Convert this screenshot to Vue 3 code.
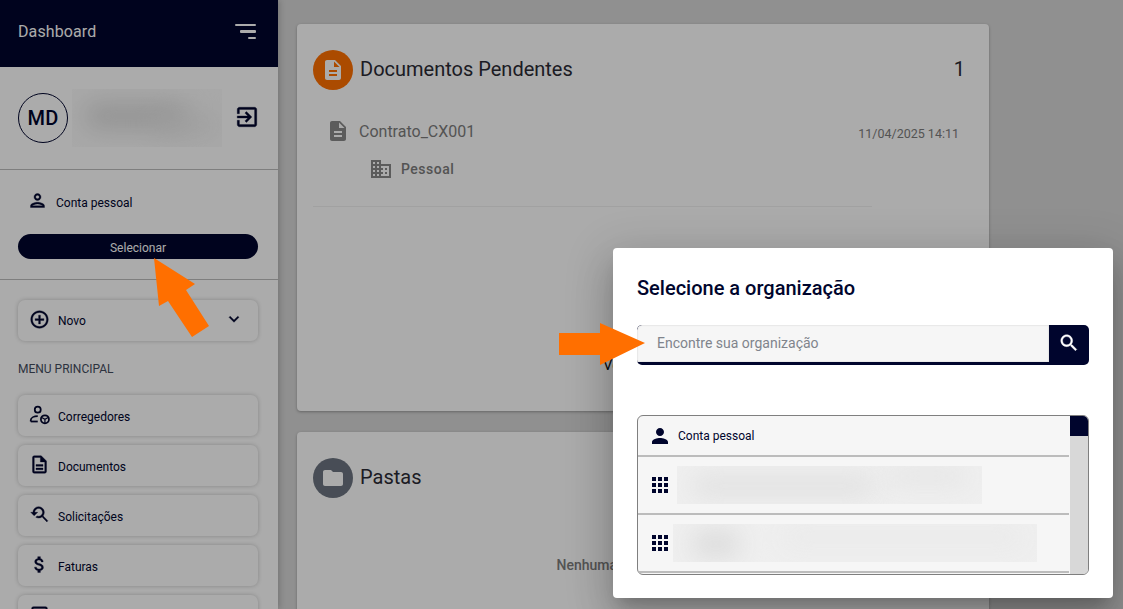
<script setup>
const paths = {
  person: 'M12 12c2.21 0 4-1.79 4-4s-1.79-4-4-4-4 1.79-4 4 1.79 4 4 4zm0 2c-2.67 0-8 1.34-8 4v2h16v-2c0-2.66-5.33-4-8-4z',
  personOutline: 'M12 6c1.1 0 2 .9 2 2s-.9 2-2 2-2-.9-2-2 .9-2 2-2m0 10c2.7 0 5.8 1.29 6 2H6c.23-.72 3.31-2 6-2m0-12C9.79 4 8 5.79 8 8s1.79 4 4 4 4-1.79 4-4-1.79-4-4-4zm0 10c-2.67 0-8 1.34-8 4v2h16v-2c0-2.66-5.33-4-8-4z',
  exit: 'M10.09 15.59L11.5 17l5-5-5-5-1.41 1.41L12.67 11H3v2h9.67l-2.58 2.59zM19 3H5c-1.11 0-2 .9-2 2v4h2V5h14v14H5v-4H3v4c0 1.1.89 2 2 2h14c1.1 0 2-.9 2-2V5c0-1.1-.9-2-2-2z',
  add: 'M13 7h-2v4H7v2h4v4h2v-4h4v-2h-4V7zm-1-5C6.48 2 2 6.48 2 12s4.48 10 10 10 10-4.48 10-10S17.52 2 12 2zm0 18c-4.41 0-8-3.59-8-8s3.59-8 8-8 8 3.59 8 8-3.59 8-8 8z',
  expand: 'M16.59 8.59L12 13.17 7.41 8.59 6 10l6 6 6-6z',
  docOutline: 'M8 16h8v2H8zm0-4h8v2H8zm6-10H6c-1.1 0-2 .9-2 2v16c0 1.1.89 2 1.99 2H18c1.1 0 2-.9 2-2V8l-6-6zm4 18H6V4h7v5h5v11z',
  doc: 'M14 2H6c-1.1 0-1.99.9-1.99 2L4 20c0 1.1.89 2 1.99 2H18c1.1 0 2-.9 2-2V8l-6-6zm2 16H8v-2h8v2zm0-4H8v-2h8v2zm-3-5V3.5L18.5 9H13z',
  searched: 'M17.01 14h-.8l-.27-.27c.98-1.14 1.57-2.61 1.57-4.23 0-3.59-2.91-6.5-6.5-6.5s-6.5 3-6.5 6.5H2l3.84 4 4.16-4H6.51C6.51 7 8.53 5 11.01 5s4.5 2.01 4.5 4.5c0 2.48-2.02 4.5-4.5 4.5-.65 0-1.26-.14-1.82-.38L7.71 15.1c.97.57 2.09.9 3.3.9 1.61 0 3.08-.59 4.22-1.57l.27.27v.79l5.01 5L21.5 19l-5-5z',
  money: 'M11.8 10.9c-2.27-.59-3-1.2-3-2.15 0-1.09 1.01-1.85 2.7-1.85 1.78 0 2.44.85 2.5 2.1h2.21c-.07-1.72-1.12-3.3-3.21-3.81V3h-3v2.16c-1.94.42-3.5 1.68-3.5 3.61 0 2.31 1.91 3.46 4.7 4.13 2.5.6 3 1.48 3 2.41 0 .69-.49 1.79-2.7 1.79-2.06 0-2.87-.92-2.98-2.1h-2.2c.12 2.19 1.76 3.42 3.68 3.83V21h3v-2.15c1.95-.37 3.5-1.5 3.5-3.55 0-2.84-2.43-3.81-4.7-4.4z',
  domain: 'M12 7V3H2v18h20V7H12zM6 19H4v-2h2v2zm0-4H4v-2h2v2zm0-4H4V9h2v2zm0-4H4V5h2v2zm4 12H8v-2h2v2zm0-4H8v-2h2v2zm0-4H8V9h2v2zm0-4H8V5h2v2zm10 12h-8v-2h2v-2h-2v-2h2v-2h-2V9h8v10zm-2-8h-2v2h2v-2zm0 4h-2v2h2v-2z',
  search: 'M15.5 14h-.79l-.28-.27C15.41 12.59 16 11.11 16 9.5 16 5.91 13.09 3 9.5 3S3 5.91 3 9.5 5.91 16 9.5 16c1.61 0 3.09-.59 4.23-1.57l.27.28v.79l5 4.99L20.49 19l-4.99-5zm-6 0C7.01 14 5 11.99 5 9.5S7.01 5 9.5 5 14 7.01 14 9.5 11.99 14 9.5 14z',
  apps: 'M4 8h4V4H4v4zm6 12h4v-4h-4v4zm-6 0h4v-4H4v4zm0-6h4v-4H4v4zm6 0h4v-4h-4v4zm6-10v4h4V4h-4zm-6 4h4V4h-4v4zm6 6h4v-4h-4v4zm0 6h4v-4h-4v4z',
  folder: 'M10 4H4c-1.1 0-1.99.9-1.99 2L2 18c0 1.1.9 2 2 2h16c1.1 0 2-.9 2-2V8c0-1.1-.9-2-2-2h-8l-2-2z',
  inbox: 'M19 3H5c-1.1 0-2 .9-2 2v14c0 1.1.9 2 2 2h14c1.1 0 2-.9 2-2V5c0-1.1-.9-2-2-2zm0 16H5V5h14v14z'
}
const menu = [
  { label: 'Documentos', icon: paths.docOutline },
  { label: 'Solicitações', icon: paths.searched },
  { label: 'Faturas', icon: paths.money },
  { label: '', icon: paths.inbox }
]
</script>

<template>
  <div class="page">
    <aside class="sidebar">
      <header class="brand">
        <span>Dashboard</span>
        <span class="burger"><i class="l1"></i><i class="l2"></i><i class="l3"></i></span>
      </header>

      <section class="user">
        <div class="avatar">MD</div>
        <div class="blur-box user-blur"><i class="blob b1"></i><i class="blob b2"></i></div>
        <svg class="exit" viewBox="0 0 24 24"><path :d="paths.exit" /></svg>
      </section>

      <section class="account">
        <div class="acc-row">
          <svg class="acc-icon" viewBox="0 0 24 24"><path :d="paths.personOutline" /></svg>
          <span>Conta pessoal</span>
        </div>
        <button class="select-btn">Selecionar</button>
      </section>

      <nav class="nav">
        <div class="nav-btn new-btn">
          <svg class="nav-icon" viewBox="0 0 24 24"><path :d="paths.add" /></svg>
          <span class="nav-label novo">Novo</span>
          <svg class="chev" viewBox="0 0 24 24"><path :d="paths.expand" /></svg>
        </div>
        <div class="section-title">MENU PRINCIPAL</div>
        <div class="nav-btn">
          <svg class="nav-icon line-icon" viewBox="0 0 24 24">
            <circle cx="10" cy="6.5" r="3.4" />
            <path d="M2 20v-1.5c0-3 4-4.6 8-4.6" />
            <path d="M2 20h8" />
            <circle cx="18.2" cy="17.5" r="4.6" />
            <path d="M14.5 15.5l3.7 2 3.7-2M18.2 17.5v4.4" class="thin" />
          </svg>
          <span class="nav-label">Corregedores</span>
        </div>
        <div v-for="item in menu" :key="item.icon" class="nav-btn">
          <svg class="nav-icon" viewBox="0 0 24 24"><path :d="item.icon" /></svg>
          <span v-if="item.label" class="nav-label">{{ item.label }}</span>
        </div>
      </nav>
    </aside>

    <main class="main">
      <article class="card pending">
        <div class="card-head">
          <span class="circle orange"><svg viewBox="0 0 24 24"><path :d="paths.doc" /></svg></span>
          <h2>Documentos Pendentes</h2>
          <span class="count">1</span>
        </div>
        <div class="doc-row">
          <svg class="doc-icon" viewBox="0 0 24 24"><path :d="paths.doc" /></svg>
          <span class="doc-name">Contrato_CX001</span>
          <span class="doc-date">11/04/2025 14:11</span>
        </div>
        <div class="org-row">
          <svg class="org-icon" viewBox="0 0 24 24"><path :d="paths.domain" /></svg>
          <span>Pessoal</span>
        </div>
        <div class="divider"></div>
        <div class="see-all">Ver todos</div>
      </article>

      <article class="card folders">
        <div class="card-head">
          <span class="circle slate"><svg viewBox="0 0 24 24"><path :d="paths.folder" /></svg></span>
          <h2>Pastas</h2>
        </div>
        <p class="empty">Nenhuma pasta encontrada</p>
      </article>
    </main>

    <div class="overlay"></div>

    <section class="modal">
      <h3>Selecione a organização</h3>
      <div class="search">
        <div class="search-input">Encontre sua organização</div>
        <div class="search-btn"><svg viewBox="0 0 24 24"><path :d="paths.search" /></svg></div>
      </div>
      <div class="org-list">
        <div class="rows">
          <div class="row first">
            <svg class="row-icon" viewBox="0 0 24 24"><path :d="paths.person" /></svg>
            <span class="row-text">Conta pessoal</span>
          </div>
          <div class="row tall">
            <svg class="row-icon" viewBox="0 0 24 24"><path :d="paths.apps" /></svg>
            <div class="blur-box r1"><i class="blob b3"></i><i class="blob b4"></i></div>
          </div>
          <div class="row tall">
            <svg class="row-icon" viewBox="0 0 24 24"><path :d="paths.apps" /></svg>
            <div class="blur-box r2"><i class="blob b5"></i><i class="blob b6"></i></div>
          </div>
        </div>
        <div class="scrollbar"><div class="thumb"></div></div>
      </div>
    </section>

    <svg class="arrows" viewBox="0 0 1123 609">
      <polygon points="154,258 195,284 186,290 209,326 192,337 168,301 159,306" fill="#ff6f00" />
      <polygon points="559,333 600,333 600,323 645,343 600,365 600,355 559,355" fill="#ff6f00" />
    </svg>
  </div>
</template>

<style>
html, body { margin: 0; padding: 0; overflow: hidden; }
</style>

<style scoped>
.page {
  position: relative;
  display: flex;
  width: 1123px;
  height: 609px;
  overflow: hidden;
  background: #d7d7d7;
  font-family: Roboto, "Liberation Sans", sans-serif;
  color: #00052d;
}
.sidebar {
  width: 278px;
  flex: none;
  background: #fff;
  box-shadow: 2px 0 6px rgba(0, 0, 0, .18);
  z-index: 1;
}
.brand {
  height: 67px;
  background: #00052d;
  color: #fff;
  display: flex;
  align-items: center;
  justify-content: space-between;
  padding: 0 22px 4px 18px;
  box-sizing: border-box;
  font-size: 16px;
  letter-spacing: .1px;
}
.burger { display: flex; flex-direction: column; align-items: flex-end; gap: 4px; }
.burger i { display: block; height: 2.4px; background: #fff; border-radius: 1px; }
.l1 { width: 21px; }
.l2 { width: 16px; }
.l3 { width: 8px; }
.user {
  height: 103px;
  display: flex;
  align-items: center;
  padding: 0 18px;
  box-sizing: border-box;
  border-bottom: 1px solid #bdbdbd;
  position: relative;
}
.avatar {
  width: 50px;
  height: 50px;
  box-sizing: border-box;
  border: 1px solid #00052d;
  border-radius: 50%;
  display: flex;
  align-items: center;
  justify-content: center;
  font-size: 20px;
  font-weight: 500;
  letter-spacing: .3px;
  flex: none;
}
.blur-box { position: relative; overflow: hidden; flex: none; }
.blob { position: absolute; display: block; filter: blur(12px); border-radius: 8px; }
.user-blur { width: 150px; height: 58px; margin-left: 4px; background: #fbfbfb; }
.b1 { left: 14px; top: 16px; width: 100px; height: 22px; background: #d8d8d8; }
.b2 { left: 80px; top: 28px; width: 64px; height: 16px; background: #eaeaea; }
.exit { width: 26px; height: 26px; margin-left: 12px; margin-top: -2px; fill: #00052d; flex: none; stroke: #00052d; stroke-width: .3; }
.account {
  height: 110px;
  padding: 0 20px 0 18px;
  box-sizing: border-box;
  border-bottom: 1px solid #bdbdbd;
}
.acc-row {
  display: flex;
  align-items: center;
  height: 64px;
  padding-left: 9px;
  padding-top: 1px;
  box-sizing: border-box;
  font-size: 12px;
}
.acc-icon { width: 21px; height: 21px; fill: #00052d; margin-right: 8px; margin-top: -5px; stroke: #00052d; stroke-width: .4; }
.select-btn {
  display: block;
  width: 240px;
  height: 25px;
  border: 0;
  padding: 2px 0 0;
  border-radius: 13px;
  background: #00052d;
  color: #fff;
  font: 12px Roboto, "Liberation Sans", sans-serif;
}
.nav { padding: 20px 20px 0 18px; }
.nav-btn {
  height: 41px;
  box-sizing: border-box;
  border-radius: 7px;
  box-shadow: 0 0 4px rgba(0, 0, 0, .22);
  display: flex;
  align-items: center;
  padding-left: 11px;
  margin-bottom: 9px;
  font-size: 12px;
}
.new-btn { margin-bottom: 0; }
.nav-icon { width: 21px; height: 21px; fill: #00052d; margin-right: 8px; margin-top: -3px; flex: none; stroke: #00052d; stroke-width: .4; }
.line-icon { fill: none; stroke-width: 2; }
.line-icon .thin { stroke-width: 1.4; }
.nav-label { padding-top: 2px; }
.nav-label.novo { padding-top: 0; }
.chev { width: 20px; height: 20px; margin-left: auto; margin-right: 14px; margin-top: -4px; fill: #00052d; stroke: #00052d; stroke-width: .4; }
.section-title { font-size: 12px; color: #444c5e; margin: 21px 0 19px; line-height: 14px; }
.main { flex: 1; padding: 24px 134px 0 19px; min-width: 0; }
.card {
  background: #fff;
  border-radius: 4px;
  box-shadow: 0 1px 3px rgba(0, 0, 0, .3);
  box-sizing: border-box;
  padding: 26px 16px 0;
  color: #333;
}
.pending { height: 387px; margin-bottom: 21px; }
.folders { height: 300px; }
.card-head { display: flex; align-items: center; height: 40px; }
.card-head h2 { margin: -2px 0 0 7px; font-size: 20px; font-weight: 400; color: #2b2b35; }
.circle { width: 40px; height: 40px; border-radius: 50%; display: flex; align-items: center; justify-content: center; flex: none; }
.circle svg { width: 24px; height: 24px; fill: #fff; }
.orange { background: #ff7000; }
.slate { background: #6c7480; }
.count { margin-left: auto; margin-right: 8px; margin-top: -2px; font-size: 20px; color: #2b2b35; }
.doc-row { display: flex; align-items: center; margin-top: 28px; padding-left: 13px; height: 26px; }
.doc-icon { width: 24px; height: 24px; fill: #8a8a8a; margin-right: 9px; flex: none; }
.doc-name { font-size: 16px; color: #7d7d7d; }
.doc-date { margin-left: auto; margin-right: 14px; margin-top: 4px; font-size: 12.5px; color: #7d7d7d; }
.org-row { display: flex; align-items: center; margin-top: 12px; height: 26px; padding-left: 56px; font-size: 14px; font-weight: 500; letter-spacing: .5px; color: #7d7d7d; }
.org-icon { width: 24px; height: 24px; fill: #8a8a8a; margin-right: 8px; }
.divider { height: 1px; background: #f0f0f0; width: 559px; margin-top: 24px; }
.see-all { margin-top: 150px; padding-left: 290px; font-size: 15px; color: #111; line-height: 16px; }
.empty { margin: 59px 0 0; text-align: center; font-size: 14px; font-weight: 500; color: #7d7d7d; }
.overlay { position: absolute; inset: 0; background: rgba(0, 0, 0, .33); z-index: 2; }
.modal {
  position: absolute;
  left: 613px;
  top: 248px;
  width: 500px;
  height: 350px;
  box-sizing: border-box;
  padding: 28px 24px 0;
  background: #fff;
  border-radius: 4px;
  z-index: 3;
  box-shadow: 0 11px 15px -7px rgba(0, 0, 0, .2), 0 24px 38px 3px rgba(0, 0, 0, .14), 0 9px 46px 8px rgba(0, 0, 0, .12);
}
.modal h3 { margin: 0; font-size: 20px; line-height: 24px; font-weight: 500; color: #00052d; }
.search {
  display: flex;
  height: 40px;
  margin-top: 25px;
  background: #00052d;
  border-radius: 5px;
  overflow: hidden;
}
.search-input {
  flex: 1;
  height: 37px;
  box-sizing: border-box;
  background: #f6f6f6;
  border-radius: 5px 0 0 0;
  padding-left: 20px;
  line-height: 36px;
  font-size: 14px;
  color: #80848c;
  box-shadow: inset 0 0 2px rgba(0, 0, 0, .2);
}
.search-btn { width: 40px; display: flex; align-items: center; justify-content: center; padding-bottom: 5px; box-sizing: border-box; }
.search-btn svg { width: 22px; height: 22px; fill: #fff; stroke: #fff; stroke-width: .4; }
.org-list {
  display: flex;
  height: 160px;
  margin-top: 50px;
  box-sizing: border-box;
  border: 1px solid #7f7f7f;
  border-radius: 6px;
  overflow: hidden;
  background: #f6f6f6;
}
.rows { flex: 1; min-width: 0; overflow: hidden; padding-right: 1px; }
.row { display: flex; align-items: center; border-bottom: 2px solid #bcbcbc; box-sizing: border-box; padding-left: 10px; }
.first { height: 41px; font-size: 12px; color: #00052d; }
.tall { height: 58px; }
.row-icon { width: 24px; height: 24px; fill: #00052d; flex: none; }
.row-text { margin-left: 6px; }
.r1 { width: 305px; height: 38px; margin-left: 5px; background: #efefef; }
.r2 { width: 364px; height: 38px; margin-left: 1px; background: #efefef; }
.b3 { left: 16px; top: 10px; width: 180px; height: 20px; background: #e0e0e0; }
.b4 { left: 210px; top: 2px; width: 80px; height: 16px; background: #e4e4e4; }
.b5 { left: 20px; top: 8px; width: 46px; height: 24px; background: #dadada; }
.b6 { left: 110px; top: 6px; width: 240px; height: 14px; background: #e8e8e8; }
.scrollbar { width: 18px; flex: none; background: #d8d8d8; }
.thumb { height: 20px; background: #00052d; }
.arrows { position: absolute; inset: 0; width: 1123px; height: 609px; z-index: 4; pointer-events: none; }
</style>
